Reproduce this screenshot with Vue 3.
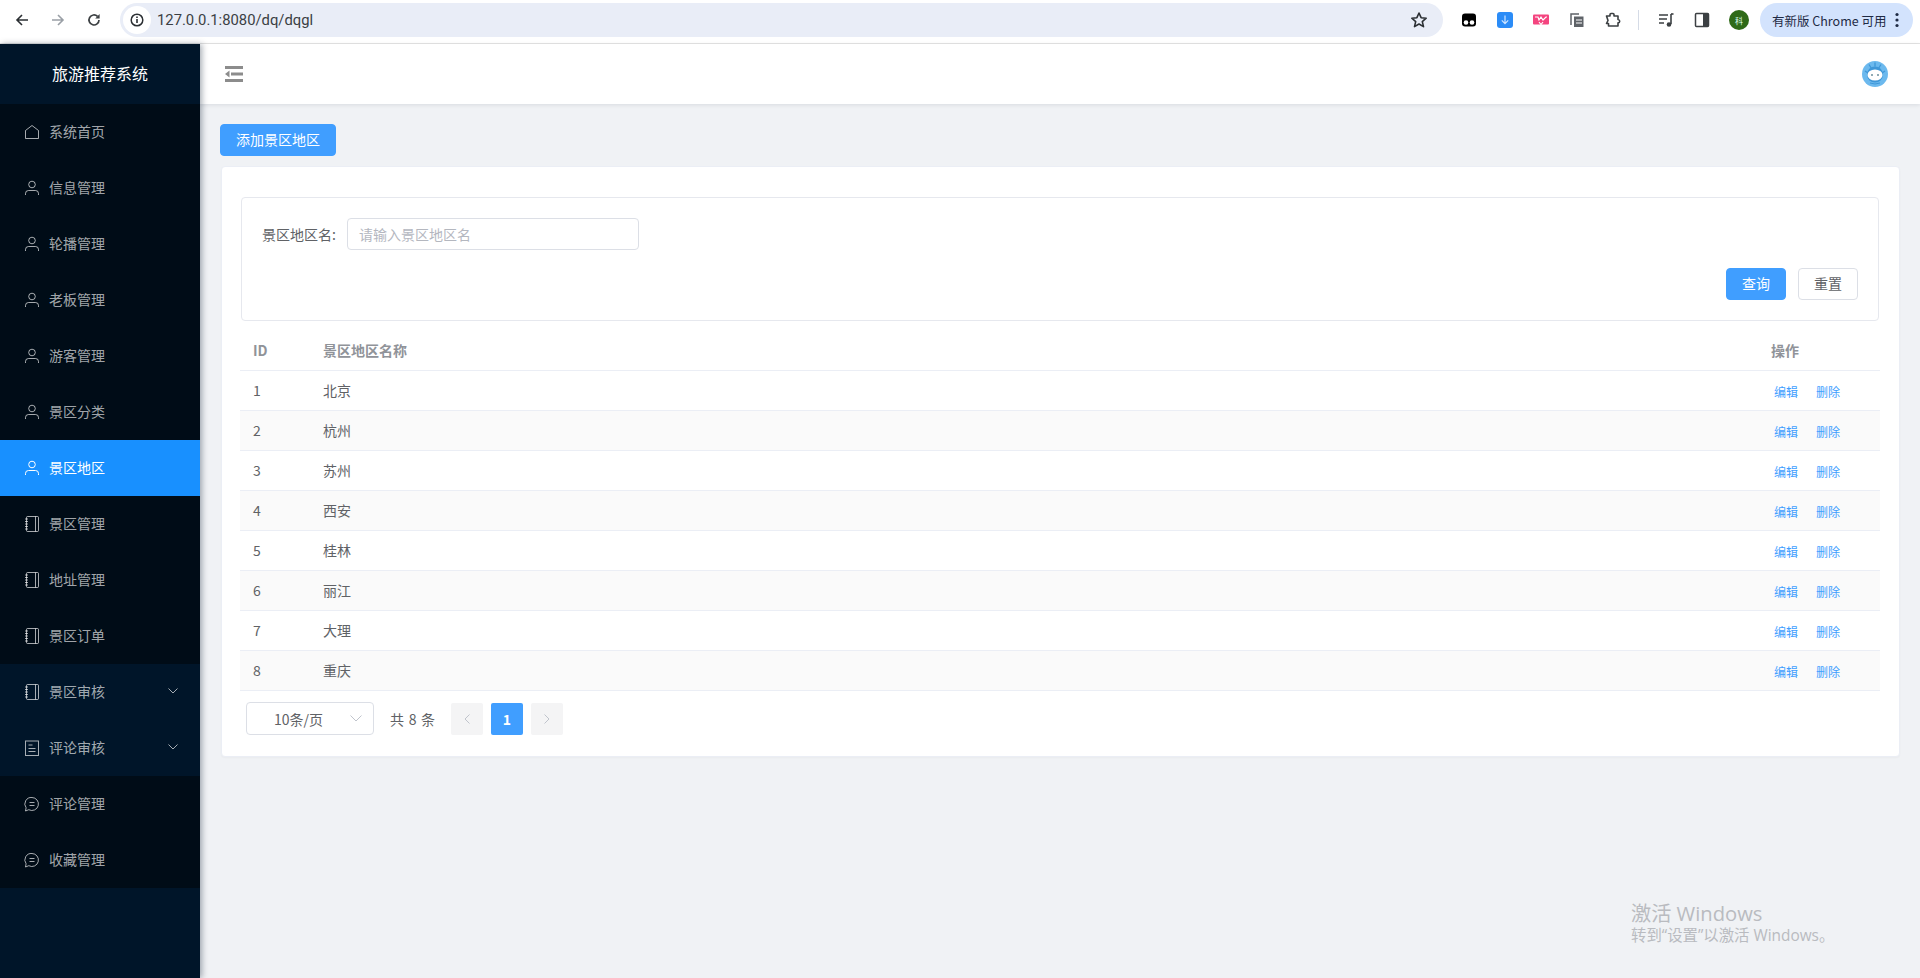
<script setup>
const menu = [
  { t: '系统首页', i: 'home' }, { t: '信息管理', i: 'user' }, { t: '轮播管理', i: 'user' },
  { t: '老板管理', i: 'user' }, { t: '游客管理', i: 'user' }, { t: '景区分类', i: 'user' },
  { t: '景区地区', i: 'user', active: true }, { t: '景区管理', i: 'book' }, { t: '地址管理', i: 'book' },
  { t: '景区订单', i: 'book' }, { t: '景区审核', i: 'book', sub: true }, { t: '评论审核', i: 'doc', sub: true },
  { t: '评论管理', i: 'chat' }, { t: '收藏管理', i: 'chat' }
]
const rows = ['北京', '杭州', '苏州', '西安', '桂林', '丽江', '大理', '重庆']
</script>

<template>
  <div class="page">
    <header class="chrome">
      <svg class="nav" viewBox="0 0 16 16" width="16" height="16"><path d="M14 8H3M8 3 3 8l5 5" fill="none" stroke="#2b2f33" stroke-width="1.6"/></svg>
      <svg class="nav" viewBox="0 0 16 16" width="16" height="16"><path d="M2 8h11M8 3l5 5-5 5" fill="none" stroke="#9aa0a6" stroke-width="1.6"/></svg>
      <svg class="nav" viewBox="0 0 16 16" width="16" height="16"><path d="M13 8a5 5 0 1 1-1.500-3.600" fill="none" stroke="#3c4043" stroke-width="1.700"/><path d="M13.600 2v4.400H9.200z" fill="#3c4043"/></svg>
      <div class="omni">
        <span class="info"><svg viewBox="0 0 14 14" width="14" height="14"><circle cx="7" cy="7" r="5.800" fill="none" stroke="#2b2f33" stroke-width="1.500"/><path d="M7 6v4M7 3.600v1.400" stroke="#2b2f33" stroke-width="1.600"/></svg></span>
        <span class="url">127.0.0.1:8080/dq/dqgl</span>
        <svg class="star" viewBox="0 0 18 18" width="18" height="18"><path d="m9 2 2.100 4.700 5.100.5-3.900 3.400 1.200 5L9 13l-4.500 2.600 1.200-5-3.900-3.400 5.100-.5z" fill="none" stroke="#2b2f33" stroke-width="1.600" stroke-linejoin="round"/></svg>
      </div>
      <div class="exts">
        <svg viewBox="0 0 16 16" width="16" height="16"><rect x="1" y="1.500" width="14" height="13" rx="3" fill="#000"/><circle cx="5" cy="10.500" r="2.300" fill="#fff"/><circle cx="11" cy="10.500" r="2.300" fill="#fff"/></svg>
        <svg viewBox="0 0 16 16" width="16" height="16"><rect width="16" height="16" rx="3" fill="#2b8cf7"/><path d="M8 3.500v8M4.800 8.400 8 11.600l3.200-3.200" fill="none" stroke="#cfe5ff" stroke-width="1.200"/></svg>
        <svg viewBox="0 0 16 16" width="16" height="16"><rect y="2.500" width="16" height="10" rx="1" fill="#f4447f"/><path d="M2 5h3l1 3 2-3 2 3 3-3h1M6 10l2 2.500 2-2.500" fill="none" stroke="#fff" stroke-width="1.200"/></svg>
        <svg viewBox="0 0 16 16" width="16" height="16"><path d="M2 13V2h8" fill="none" stroke="#5f6368" stroke-width="1.500"/><path d="M5 4.500h9.500V15H5z" fill="#5f6368"/><path d="M7 8h6M7 11h6" stroke="#fff" stroke-width="1.200"/></svg>
        <svg viewBox="0 0 16 16" width="16" height="16"><path d="M1.500 4h3.500V2.500a1 1 0 0 1 1-1h2a1 1 0 0 1 1 1V4h4v3.500a1.700 1.700 0 0 1 0 3.400V14H3.500v-2.500H1.500l1.500-3z" fill="none" stroke="#3c4043" stroke-width="1.600" stroke-linejoin="round"/></svg>
        <i class="sep"></i>
        <svg viewBox="0 0 16 16" width="16" height="16"><path d="M1 3h9M1 7h8M1 11h5" stroke="#3c4043" stroke-width="1.500"/><path d="M13 2v10" stroke="#3c4043" stroke-width="1.600"/><path d="M13 2h2.500" stroke="#3c4043" stroke-width="1.600"/><circle cx="11" cy="12.500" r="2.300" fill="#3c4043"/></svg>
        <svg viewBox="0 0 16 16" width="16" height="16"><rect x="1.500" y="1.500" width="13" height="13" rx="1" fill="#fff" stroke="#3c4043" stroke-width="1.500"/><rect x="9" y="1.500" width="5.500" height="13" fill="#3c4043"/></svg>
        <span class="prof">科</span>
      </div>
      <div class="update">有新版 Chrome 可用<svg viewBox="0 0 4 16" width="4" height="16"><circle cx="2" cy="2.500" r="1.600" fill="#1f2a44"/><circle cx="2" cy="8" r="1.600" fill="#1f2a44"/><circle cx="2" cy="13.500" r="1.600" fill="#1f2a44"/></svg></div>
    </header>

    <div class="app">
      <aside class="side">
        <div class="logo">旅游推荐系统</div>
        <nav>
          <div v-for="m in menu" :key="m.t" class="item" :class="{ active: m.active, sub: m.sub }">
            <svg class="ico" viewBox="0 0 16 16" width="16" height="16" fill="none" stroke="currentColor" stroke-width="1">
              <path v-if="m.i === 'home'" d="M1.500 6.500 8 1.500l6.500 5v8h-13z"/>
              <g v-else-if="m.i === 'user'"><circle cx="8" cy="4.500" r="3.300"/><path d="M1.500 15v-1.500a3 3 0 0 1 3-3h7a3 3 0 0 1 3 3V15"/></g>
              <g v-else-if="m.i === 'book'"><rect x="2.500" y=".5" width="12" height="15" rx="1"/><path d="M11.500.5v15M1 3h3M1 5.500h3M1 8h3M1 10.500h3M1 13h3"/></g>
              <g v-else-if="m.i === 'doc'"><rect x="1.500" y="1" width="13" height="14.500"/><path d="M4.500 5h4M4.500 8.500h7M4.500 11.500h7"/></g>
              <g v-else><path d="M8 1.500a6.500 6.500 0 1 1-3.200 12.200L1.500 15l.6-3.200A6.500 6.500 0 0 1 8 1.500z"/><path d="M5.500 6.500h5M5.500 9.500h5"/></g>
            </svg>
            <span>{{ m.t }}</span>
            <svg v-if="m.sub" class="chev" viewBox="0 0 10 6" width="10" height="6"><path d="M.5.500 5 5 9.500.500" fill="none" stroke="currentColor"/></svg>
          </div>
        </nav>
      </aside>

      <div class="main">
        <div class="bar">
          <svg viewBox="0 0 18 16" width="18" height="16"><path d="M0 1.500h18M6 8h12M0 14.500h18" stroke="#8c8c8c" stroke-width="3"/><path d="M4.500 4.500v7L0 8z" fill="#8c8c8c"/></svg>
          <svg class="bot" viewBox="0 0 26 26" width="26" height="26">
            <circle cx="13" cy="13" r="13" fill="#6cb9ee"/>
            <path d="M7 3.500l2.500 4M19 3.500l-2.500 4M13 1.500v4M3 10l3 2M23 10l-3 2" stroke="#3f97d8" stroke-width="1.300"/>
            <circle cx="13" cy="13.500" r="8" fill="#3f97d8"/>
            <ellipse cx="13" cy="14" rx="7.500" ry="5.500" fill="#fff"/>
            <circle cx="10" cy="14" r="1" fill="#6b8f9c"/><circle cx="16" cy="14" r="1" fill="#6b8f9c"/>
            <path d="M8 22q5 2 10 0" stroke="#3f97d8" fill="none"/>
          </svg>
        </div>
        <div class="content">
          <button class="btn primary add">添加景区地区</button>
          <section class="card">
            <div class="search">
              <div class="field">
                <label>景区地区名:</label>
                <div class="input">请输入景区地区名</div>
              </div>
              <div class="ops">
                <button class="btn primary small">查询</button>
                <button class="btn plain small">重置</button>
              </div>
            </div>
            <div class="tbl">
              <div class="row head">
                <span class="c-id">ID</span><span class="c-name">景区地区名称</span><span class="c-op">操作</span>
              </div>
              <div v-for="(r, i) in rows" :key="r" class="row" :class="{ even: i % 2 === 1 }">
                <span class="c-id">{{ i + 1 }}</span><span class="c-name">{{ r }}</span>
                <span class="c-op links"><a>编辑</a><a>删除</a></span>
              </div>
            </div>
            <div class="pager">
              <div class="size">10条/页<svg viewBox="0 0 12 7" width="12" height="7"><path d="M.5.500 6 6 11.500.500" fill="none" stroke="#c0c4cc"/></svg></div>
              <span class="total">共 8 条</span>
              <span class="pg"><svg viewBox="0 0 6 10" width="6" height="10"><path d="M5.500.500 1 5l4.500 4.500" fill="none" stroke="#c0c4cc"/></svg></span>
              <span class="pg on">1</span>
              <span class="pg"><svg viewBox="0 0 6 10" width="6" height="10"><path d="M.5.500 5 5 .5 9.500" fill="none" stroke="#c0c4cc"/></svg></span>
            </div>
          </section>
        </div>
      </div>
    </div>

    <div class="wm">
      <div class="w1">激活 Windows</div>
      <div class="w2">转到“设置”以激活 Windows。</div>
    </div>
  </div>
</template>

<style scoped>
.page { position: relative; width: 1920px; height: 978px; overflow: hidden; display: flex; flex-direction: column; font-family: "Noto Sans CJK SC", "Liberation Sans", sans-serif; background: #f0f2f5; }
.chrome { height: 44px; box-sizing: border-box; background: #fff; border-bottom: 1px solid #e4e4e4; display: flex; align-items: center; padding: 0 0 3px 14px; flex: none; }
.nav { margin-right: 20px; flex: none; }
.nav:nth-child(3) { margin-right: 18px; }
.omni { width: 1323px; height: 34px; border-radius: 17px; background: #e9edf7; display: flex; align-items: center; padding: 0 3px; box-sizing: border-box; flex: none; }
.info { width: 28px; height: 28px; border-radius: 50%; background: #fff; display: flex; align-items: center; justify-content: center; flex: none; }
.url { margin-left: 6px; font-size: 14.800px; color: #3b3f44; flex: 1; font-family: "Roboto", "Liberation Sans", sans-serif; }
.star { margin-right: 12px; }
.exts { display: flex; align-items: center; gap: 20px; margin-left: 18px; width: 298px; flex: none; }
.exts svg { flex: none; }
.sep { width: 1px; height: 20px; background: #d5dbe6; margin: 0 -1px 0 -3px; }
.prof { width: 20px; height: 20px; border-radius: 50%; background: #2f6a18; color: #dfe; font-size: 8px; display: flex; align-items: center; justify-content: center; margin-left: -1px; }
.update { width: 153px; height: 34px; box-sizing: border-box; border-radius: 17px; background: #d3e3fd; color: #1f2a44; font-size: 12.500px; display: flex; align-items: center; justify-content: space-between; padding: 0 14px 0 12px; margin-left: 1px; flex: none; white-space: nowrap; }

.app { flex: 1; display: flex; min-height: 0; }
.side { width: 200px; flex: none; background: #001529; box-shadow: 2px 0 6px rgba(0, 21, 41, .35); position: relative; z-index: 2; }
.logo { height: 60px; line-height: 58px; text-align: center; color: #fff; font-size: 16px; }
.item { height: 56px; box-sizing: border-box; padding: 0 0 2px 24px; display: flex; align-items: center; font-size: 14px; color: rgba(255, 255, 255, .65); background: #000c17; }
.item .ico { margin: 2px 9px 0 0; flex: none; }
.item.sub { background: #001529; }
.item.active { background: #1890ff; color: #fff; }
.chev { margin-left: auto; margin-right: 22px; }

.main { flex: 1; min-width: 0; display: flex; flex-direction: column; }
.bar { height: 60px; flex: none; background: #fff; box-shadow: 0 1px 4px rgba(0, 21, 41, .1); display: flex; align-items: center; justify-content: space-between; padding: 0 32px 0 25px; box-sizing: border-box; position: relative; }
.content { padding: 20px 20px 0; }
.btn { font-family: inherit; font-size: 14px; border-radius: 4px; box-sizing: border-box; cursor: pointer; display: block; padding: 0 0 2px; }
.primary { background: #409eff; border: 1px solid #409eff; color: #fff; }
.plain { background: #fff; border: 1px solid #dcdfe6; color: #606266; }
.add { width: 116px; height: 32px; }
.small { width: 60px; height: 32px; }
.card { margin: 10px 0 0 1px; width: 1679px; height: 591px; box-sizing: border-box; background: #fff; border: 1px solid #ebeef5; border-radius: 4px; padding: 30px 19px 0; box-shadow: 0 1px 2px rgba(0, 0, 0, .03); }
.search { height: 124px; box-sizing: border-box; border: 1px solid #e6e8ee; border-radius: 4px; margin-right: 1px; padding: 20px 20px 0; }
.field { display: flex; align-items: center; height: 32px; }
.field label { font-size: 14px; color: #606266; width: 85px; flex: none; }
.input { width: 292px; height: 32px; box-sizing: border-box; border: 1px solid #dcdfe6; border-radius: 4px; padding: 0 11px; line-height: 30px; font-size: 14px; color: #b4b7bf; }
.ops { display: flex; justify-content: flex-end; gap: 12px; margin-top: 18px; }

.tbl { margin: 10px 0 0 -1px; }
.row { display: flex; align-items: center; height: 40px; box-sizing: border-box; padding-bottom: 2px; border-bottom: 1px solid #ebeef5; font-size: 14px; color: #606266; }
.row.head { color: #909399; font-weight: 700; }
.row.even { background: #fafafa; }
.c-id { width: 83px; padding-left: 13px; box-sizing: border-box; flex: none; }
.c-name { flex: 1; }
.c-op { width: 109px; flex: none; }
.links { display: flex; gap: 18px; padding: 4px 0 0 3px; box-sizing: border-box; font-size: 12px; color: #409eff; }

.pager { display: flex; align-items: center; margin: 11px 0 0 5px; font-size: 14px; color: #606266; }
.size { width: 128px; height: 33px; box-sizing: border-box; border: 1px solid #dcdfe6; border-radius: 4px; display: flex; align-items: center; justify-content: space-between; padding: 0 11px 0 27px; }
.total { margin-left: 16px; width: 61px; flex: none; word-spacing: 1.500px; }
.pg { width: 32px; height: 32px; border-radius: 2px; background: #f4f4f5; display: flex; align-items: center; justify-content: center; margin-right: 8px; }
.pg.on { background: #409eff; color: #fff; font-weight: 700; }

.wm { position: absolute; left: 1631px; top: 901px; color: #b9bbc0; z-index: 3; }
.w1 { font-size: 20.200px; line-height: 25px; font-family: "Open Sans", "Noto Sans CJK SC", sans-serif; }
.w2 { font-size: 15.400px; line-height: 20px; font-family: "Open Sans", "Noto Sans CJK SC", sans-serif; }
</style>
